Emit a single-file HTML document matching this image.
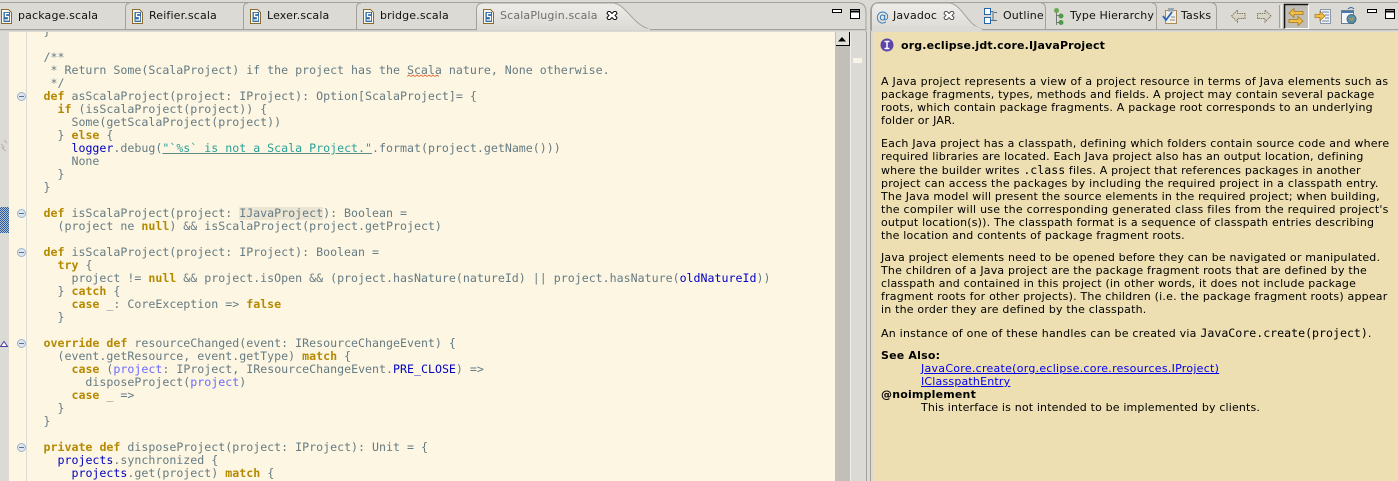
<!DOCTYPE html>
<html><head><meta charset="utf-8"><style>
html,body{margin:0;padding:0;width:1398px;height:481px;overflow:hidden;background:#dcdad5}
.a{position:absolute}
#code{position:absolute;left:43.5px;top:25px;margin:0;font:11.615px/13px "DejaVu Sans Mono",monospace;color:#657b83;white-space:pre}
#code b{color:#b58900}
#code i{font-style:normal;color:#0000c0}
#code u{color:#6a6aff;text-decoration:none}
#code s{text-decoration:underline;text-decoration-color:#5f8a8a;color:#2aa198}
.tab{position:absolute;top:8px;font:11px/16px "DejaVu Sans",sans-serif;color:#111;white-space:nowrap;letter-spacing:.15px}
.d{position:absolute;left:881px;font:11px/13px "DejaVu Sans",sans-serif;color:#000;white-space:pre;letter-spacing:.19px}
.d b{font-weight:bold}
.d a{color:#0000ee;text-decoration:underline}
.d tt{font:11.6px "DejaVu Sans Mono",monospace;letter-spacing:0}
</style></head><body>
<div class="a" style="left:0;top:32px;width:835px;height:449px;background:#fdf6e3;overflow:hidden">
<div class="a" style="left:0;top:0;width:9px;height:449px;background:#dcdad5"></div>
<div class="a" style="left:26px;top:0;width:1px;height:449px;background:#dcdad5"></div>
<div class="a" style="left:239px;top:175px;width:84px;height:13px;background:#ebe6d4"></div>
<div class="a" style="left:0;top:175px;width:9px;height:26px;background:repeating-conic-gradient(#2f5a96 0 25%,#a9bfd8 0 50%) 0 0/2px 2px"></div>
<svg class="a" style="left:407px;top:42px" width="34" height="4"><path d="M0 2.500l2-1.500 2 1.500 2-1.500 2 1.500 2-1.500 2 1.500 2-1.500 2 1.500 2-1.500 2 1.500 2-1.500 2 1.500 2-1.500 2 1.500 2-1.500 2 1.500" fill="none" stroke="#e8703a" stroke-width=".8"/></svg>
<pre id="code" style="top:-7px">}

/**
 * Return Some(ScalaProject) if the project has the Scala nature, None otherwise.
 */
<b>def</b> asScalaProject(project: IProject): Option[ScalaProject]= {
  <b>if</b> (isScalaProject(project)) {
    Some(getScalaProject(project))
  } <b>else</b> {
    <i>logger</i>.debug(<s>"`%s` is not a Scala Project."</s>.format(project.getName()))
    None
  }
}

<b>def</b> isScalaProject(project: IJavaProject): Boolean =
  (project ne <b>null</b>) &amp;&amp; isScalaProject(project.getProject)

<b>def</b> isScalaProject(project: IProject): Boolean =
  <b>try</b> {
    project != <b>null</b> &amp;&amp; project.isOpen &amp;&amp; (project.hasNature(natureId) || project.hasNature(<i>oldNatureId</i>))
  } <b>catch</b> {
    <b>case</b> _: CoreException =&gt; <b>false</b>
  }

<b>override</b> <b>def</b> resourceChanged(event: IResourceChangeEvent) {
  (event.getResource, event.getType) <b>match</b> {
    <b>case</b> (<u>project</u>: IProject, IResourceChangeEvent.<i>PRE_CLOSE</i>) =&gt;
      disposeProject(<u>project</u>)
    <b>case</b> _ =&gt;
  }
}

<b>private</b> <b>def</b> disposeProject(project: IProject): Unit = {
  <i>projects</i>.synchronized {
    <i>projects</i>.get(project) <b>match</b> {</pre>
<svg class="a" style="left:0;top:0" width="30" height="449">
<g fill="#dbe6f1" stroke="#9fb4ca"><circle cx="21.500" cy="64.500" r="4"/><circle cx="21.500" cy="181.500" r="4"/><circle cx="21.500" cy="220.500" r="4"/><circle cx="21.500" cy="311.500" r="4"/><circle cx="21.500" cy="415.500" r="4"/></g>
<g stroke="#5b7186"><path d="M19 64.500h5M19 181.500h5M19 220.500h5M19 311.500h5M19 415.500h5"/></g>
<path d="M0.500 314.500h7l-3.500-5z" fill="#fff" stroke="#4a3fa5"/>
<path d="M1 112l3 3-2 1 4 3M4 108l3 3" stroke="#b5b3ac" fill="none"/>
</svg>
</div>

<svg class="a" style="left:0;top:0" width="1398" height="32">
<defs><linearGradient id="g" x1="0" y1="0" x2="0" y2="1"><stop offset="0" stop-color="#eeede9"/><stop offset="1" stop-color="#dcdad5"/></linearGradient>
<g id="f"><path d="M1.500 9.500h7l3 3V23.500H1.500z" fill="#fbf8ee" stroke="#8a6a2e"/><rect x="3.500" y="12" width="6.500" height="10" fill="#2f6ca8"/><path d="M9 13.500H5.500V16.500H8.500V20H4.500" fill="none" stroke="#fff" stroke-width="1.300"/></g></defs>
<path d="M0 2.500H856Q866 2.500 866 12V32" fill="none" stroke="#a3a19b"/>
<path d="M870.500 32V12Q870.500 2.500 880 2.500H1398" fill="none" stroke="#a3a19b"/>
<path d="M0 29.500H866M870 29.500H1398" stroke="#a3a19b"/>
<path d="M0 30.500H866M870 30.500H1398" stroke="#d0cec8"/>
<g fill="none" stroke="#a3a19b"><path d="M125.500 29V8Q125.500 3 130 3"/><path d="M243.500 29V8Q243.500 3 248 3"/><path d="M356.500 29V8Q356.500 3 361 3"/></g>
<path d="M476.500 29V9Q477 3 483 3H614C626 5 634 26 650 29H476.500Z" fill="url(#g)" stroke="#a3a19b"/>
<path d="M477 29.500H650" stroke="#dcdad5" stroke-width="2"/>
<path d="M871.500 31V10Q872 3 878 3H950C962 5 968 26 982 29" fill="url(#g)" stroke="#a3a19b"/>
<path d="M872 29V31H982V29L975 26 872 26Z" fill="#dcdad5"/>
<g fill="none" stroke="#a3a19b"><path d="M1045.500 29V9Q1045.500 3 1041 3"/><path d="M1156.500 29V9Q1156.500 3 1152 3"/><path d="M1216.500 29V9Q1216.500 3 1212 3"/></g>
<path d="M1279.500 5V28" stroke="#a3a19b"/><path d="M1281.500 5V28" stroke="#f4f3f0"/>
<!-- file icons -->
<use href="#f" x="0"/><use href="#f" x="131"/><use href="#f" x="249"/><use href="#f" x="362"/><use href="#f" x="482"/>
<!-- close -->
<path d="M608 11.500l2 0 2 2 2-2 2 0 1 2-2 2 2 2-1 2h-2l-2-2-2 2h-2l-1-2 2-2-2-2z" fill="#fff" stroke="#111"/>
<path d="M945 11.500l2 0 2 2 2-2 2 0 1 2-2 2 2 2-1 2h-2l-2-2-2 2h-2l-1-2 2-2-2-2z" fill="#fff" stroke="#555"/>
<!-- min/max left -->
<rect x="832.500" y="9.500" width="9" height="3" fill="#fff" stroke="#000"/>
<rect x="850.500" y="9.500" width="9" height="9" fill="#fff" stroke="#000"/><path d="M851 11.500h8" stroke="#000" stroke-width="2"/>
<!-- min/max right -->
<rect x="1367.500" y="9.500" width="9" height="3" fill="#fff" stroke="#000"/>
<rect x="1385.500" y="9.500" width="9" height="9" fill="#fff" stroke="#000"/><path d="M1386 11.500h8" stroke="#000" stroke-width="2"/>
<!-- javadoc @ -->
<text x="876" y="21" font-family="DejaVu Sans" font-size="13" fill="#2f7ab8">@</text>
<!-- outline -->
<g fill="#fff" stroke="#2467b0"><rect x="984.500" y="8.500" width="6" height="6"/><rect x="984.500" y="17.500" width="6" height="6"/></g>
<path d="M991 11.500h2V20.500h-2M994 12.500h3M993 20.500h4" stroke="#5a6f80" fill="none"/>
<!-- type hierarchy -->
<path d="M1056.500 11V25M1056.500 15.500H1060M1056.500 22.500H1060" stroke="#777" fill="none"/>
<circle cx="1056.500" cy="10.500" r="2.500" fill="#6aa84f"/><circle cx="1061" cy="16" r="2.500" fill="#4f9a4a"/><circle cx="1061" cy="22.500" r="2.500" fill="#4f9a4a"/>
<!-- tasks -->
<rect x="1165.500" y="10.500" width="11" height="13" fill="#f4efe0" stroke="#a88a5c"/><rect x="1168" y="8" width="6" height="3.500" fill="#9aa5b0"/><path d="M1163 16l3 4 6-8" fill="none" stroke="#1f5fbf" stroke-width="1.700"/>
<path d="M1171 17h4M1170 20h5" stroke="#7a8a9a"/>
<!-- arrows -->
<path d="M1231.500 16l6-6v3.500h7.500v5h-7.500v3.500z" fill="#d8d5c8" stroke="#7f7b60" stroke-dasharray="1.500 .8"/>
<path d="M1271 16l-6-6v3.500h-7.500v5h7.500v3.500z" fill="#d8d5c8" stroke="#7f7b60" stroke-dasharray="1.500 .8"/>
<!-- toggle -->
<rect x="1284" y="4" width="25" height="25" fill="#c0beb7"/>
<path d="M1284.500 29V4.500H1308.500" fill="none" stroke="#111" stroke-width="1.500"/><path d="M1284.500 28.500H1308.500V4.500" fill="none" stroke="#fff"/>
<path d="M1289 13l5-4.500v3h9v3h-9v3z" fill="#f2c04a" stroke="#a87a10" stroke-width=".8"/>
<path d="M1303 21l-5-4.500v3h-9v3h9v3z" fill="#f2c04a" stroke="#a87a10" stroke-width=".8"/>
<!-- link -->
<rect x="1320.500" y="9.500" width="10" height="14" fill="#f0f2f6" stroke="#8a97a8"/>
<path d="M1322 12h7M1325 15h4M1325 18h4M1322 21h7" stroke="#6f87b0"/>
<path d="M1315 14.500h5v-3l5 4.500-5 4.500v-3h-5z" fill="#f2c04a" stroke="#a87a10" stroke-width=".8"/>
<!-- browser -->
<rect x="1341.500" y="10.500" width="12" height="13" fill="#f2f5f9" stroke="#6b7f95"/><rect x="1342" y="11" width="11" height="2" fill="#4a78b0"/>
<circle cx="1351.500" cy="19" r="4.500" fill="#5a8fa0" stroke="#3f6a80"/><path d="M1349 18l3 2 2-3" stroke="#c9a23a" fill="none"/>
<path d="M1348 9q3-3 6 0" stroke="#2f6ca8" fill="none"/>
</svg>

<div class="tab" style="left:18px">package.scala</div>
<div class="tab" style="left:149px">Reifier.scala</div>
<div class="tab" style="left:267px">Lexer.scala</div>
<div class="tab" style="left:380px">bridge.scala</div>
<div class="tab" style="left:500px;color:#6f6f6c">ScalaPlugin.scala</div>
<div class="tab" style="left:893px">Javadoc</div>
<div class="tab" style="left:1003px">Outline</div>
<div class="tab" style="left:1070px">Type Hierarchy</div>
<div class="tab" style="left:1181px">Tasks</div>

<!-- scrollbar -->
<div class="a" style="left:835px;top:32px;width:15px;height:449px;background:#c1bfb8"></div>
<div class="a" style="left:836px;top:32px;width:13px;height:13px;background:#e2e0db;border-bottom:1px solid #000;border-right:1px solid #000"></div>
<svg class="a" style="left:837px;top:36px" width="11" height="6"><path d="M1 5.500h8L5 1z" fill="#000"/></svg>
<div class="a" style="left:850px;top:32px;width:1px;height:449px;background:#f0efec"></div>
<div class="a" style="left:853px;top:58px;width:9px;height:5px;background:#f7f3e6"></div>
<div class="a" style="left:866px;top:32px;width:1px;height:449px;background:#a3a19b"></div>
<div class="a" style="left:870px;top:32px;width:1px;height:449px;background:#a3a19b"></div>

<!-- javadoc -->
<div class="a" style="left:873px;top:32px;width:525px;height:449px;background:#eddfb1"></div>
<svg class="a" style="left:880px;top:38px" width="14" height="14"><circle cx="7" cy="7" r="6.500" fill="#5b45a8"/><path d="M4.500 3.500h5M7 3.500v7M4.500 10.500h5" stroke="#fff" stroke-width="1.500"/></svg>
<div class="d" style="left:901px;top:39px;font-weight:bold;letter-spacing:.15px">org.eclipse.jdt.core.IJavaProject</div>
<div class="d" style="top:75px"><span style="letter-spacing:.27px">A Java project represents a view of a project resource in terms of Java elements such as</span>
package fragments, types, methods and fields. A project may contain several package
roots, which contain package fragments. A package root corresponds to an underlying
folder or JAR.</div>
<div class="d" style="top:137px"><span style="letter-spacing:.23px">Each Java project has a classpath, defining which folders contain source code and where</span>
required libraries are located. Each Java project also has an output location, defining
where the builder writes <tt>.class</tt> files. A project that references packages in another
<span style="letter-spacing:.24px">project can access the packages by including the required project in a classpath entry.</span>
The Java model will present the source elements in the required project; when building,
<span style="letter-spacing:.25px">the compiler will use the corresponding generated class files from the required project's</span>
output location(s)). The classpath format is a sequence of classpath entries describing
the location and contents of package fragment roots.</div>
<div class="d" style="top:251px"><span style="letter-spacing:.18px">Java project elements need to be opened before they can be navigated or manipulated.</span>
The children of a Java project are the package fragment roots that are defined by the
classpath and contained in this project (in other words, it does not include package
<span style="letter-spacing:.2px">fragment roots for other projects). The children (i.e. the package fragment roots) appear</span>
in the order they are defined by the classpath.</div>
<div class="d" style="top:326px;letter-spacing:.23px">An instance of one of these handles can be created via <tt>JavaCore.create(project)</tt>.</div>
<div class="d" style="top:349px"><b>See Also:</b></div>
<div class="d" style="left:921px;top:362px;letter-spacing:.27px"><a>JavaCore.create(org.eclipse.core.resources.IProject)</a></div>
<div class="d" style="left:921px;top:375px"><a>IClasspathEntry</a></div>
<div class="d" style="top:388px"><b>@noimplement</b></div>
<div class="d" style="left:921px;top:401px;letter-spacing:.16px">This interface is not intended to be implemented by clients.</div>
</body></html>
